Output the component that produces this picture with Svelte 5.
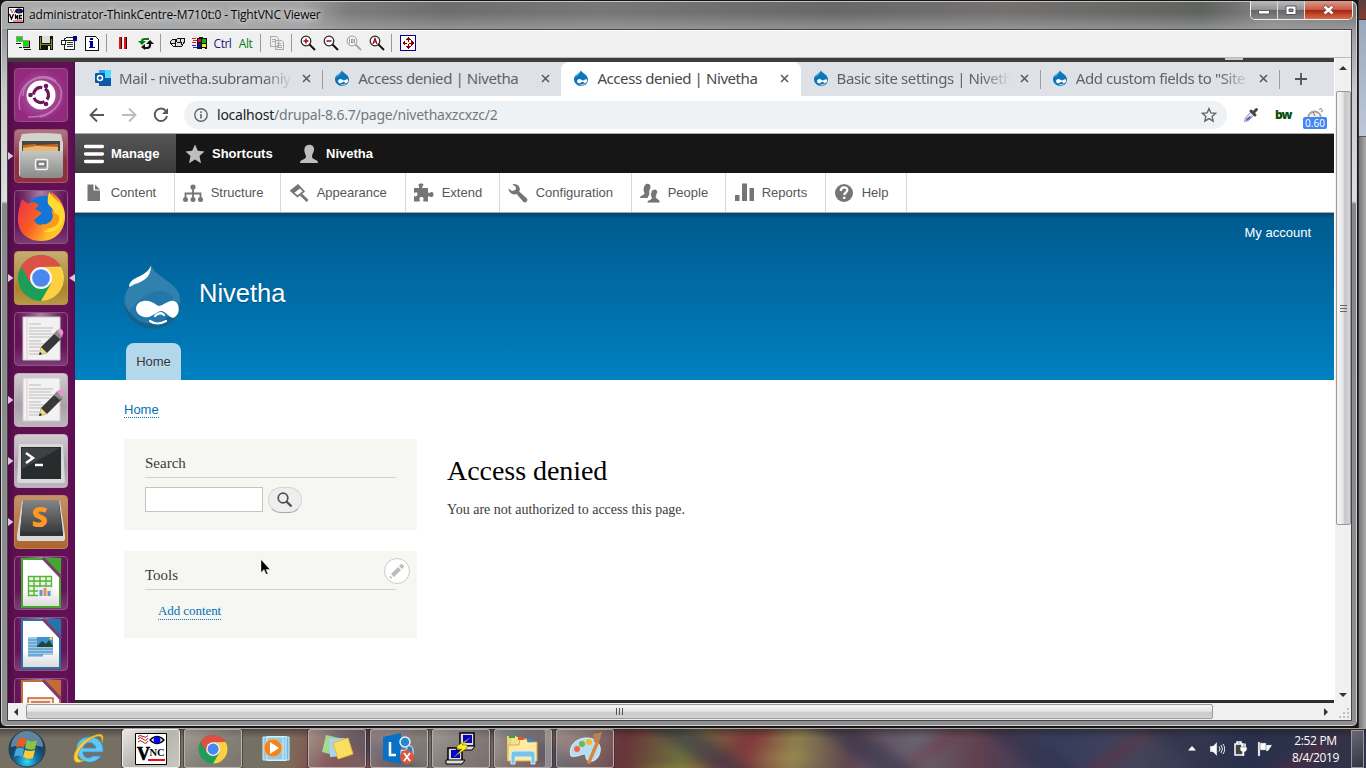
<script>
  const tabs = [
    { icon: 'mail', title: 'Mail - nivetha.subramaniy', fade: true },
    { icon: 'drop', title: 'Access denied | Nivetha' },
    { icon: 'drop', title: 'Access denied | Nivetha', active: true },
    { icon: 'drop', title: 'Basic site settings | Niveth', fade: true },
    { icon: 'drop', title: 'Add custom fields to "Site', fade: true }
  ];
  const vncTools = ['new', 'save', 'opts', 'info', '|', 'pause', 'refresh', '|', 'keys', 'win', 'Ctrl', 'Alt', '|', 'copy', '|', 'zin', 'zout', 'z100', 'zauto', '|', 'full'];
  const menu = [
    { name: 'Content', w: 100 }, { name: 'Structure', w: 106 }, { name: 'Appearance', w: 125 },
    { name: 'Extend', w: 94 }, { name: 'Configuration', w: 132 }, { name: 'People', w: 94 },
    { name: 'Reports', w: 100 }, { name: 'Help', w: 81 }
  ];
  const apps = [
    { id: 'dash' }, { id: 'files', run: true }, { id: 'firefox' }, { id: 'chrome', run: true, focus: true },
    { id: 'edit' }, { id: 'edit', run: true, light: true }, { id: 'term', run: true }, { id: 'subl', run: true },
    { id: 'calc' }, { id: 'writer' }, { id: 'impress' }
  ];
  const tasks = [
    { id: 'ie' }, { id: 'vnc', on: true, open: true }, { id: 'chrome', open: true }, { id: 'wmp' },
    { id: 'notes', open: true }, { id: 'lync', open: true }, { id: 'putty', open: true },
    { id: 'explorer', open: true, stack: true }, { id: 'paint', open: true }
  ];
</script>

{#snippet drop()}
  <svg class="fav" viewBox="0 0 57 64">
    <path d="M28 0C30 11 57 17 57 37C57 54 44 64 29 64C13 64 0 53 0 37C0 16 24 15 28 0Z" fill="#0c76b8" />
    <path d="M28 0C25 14 6 18 3 27C14 25 28 13 28 0Z" fill="#58b3e2" />
    <path d="M22 36C29 36 31 42 36 42C41 42 43 36 50 37C58 40 51 55 44 53C39 50 37 46 32 48C27 51 23 55 17 52C9 47 13 36 22 36Z" fill="#fff" />
    <path d="M26 58Q34 63 44 56" stroke="#fff" stroke-width="3" fill="none" />
  </svg>
{/snippet}

{#snippet chromeLogo()}
  <circle cx="24" cy="24" r="23" fill="#1b9e58" />
  <path d="M4.1 12.5A23 23 0 0 1 43.9 12.5L24 13L14 30Z" fill="#dd5044" />
  <path d="M43.9 12.5A23 23 0 0 1 24 47L34 29.5L24 13Z" fill="#fdd041" />
  <circle cx="24" cy="24" r="11" fill="#f4f4f4" />
  <circle cx="24" cy="24" r="8.8" fill="#4b87ee" />
{/snippet}

{#snippet vncIcon(id)}
  {#if id === 'Ctrl' || id === 'Alt'}
    <span class={id === 'Ctrl' ? 'ctrl' : 'alt'}>{id}</span>
  {:else}
    <svg width="16" height="16" viewBox="0 0 16 16" shape-rendering={id[0] === 'z' || id === 'refresh' ? 'auto' : 'crispEdges'}>
      {#if id === 'new'}
        <path d="M1 1h7v6H1zM8 5h7v7H8z" fill="#999" />
        <path d="M2 2h5v4H2zM8 6h5v5H8z" fill="#00e000" />
        <path d="M1 8h5v1H1zM3 9h1v4h3v-1H4V9zM14 6h1v7H8v-1h6zM9 14h7v1H9z" fill="#111" />
      {:else if id === 'save'}
        <path d="M1 1h14v14H1z" fill="#111" /><path d="M2 2h1v12H2zM13 4h1v10h-1zM3 9h10v1H3z" fill="#8a8a15" />
        <path d="M4 1h8v7H4z" fill="#ddd" /><path d="M10 11h2v4h-2z" fill="#eee" />
      {:else if id === 'opts'}
        <path d="M3.5 3.500h10v11h-10z" fill="#fff" stroke="#222" /><path d="M.5 5.500h4v4h-4zM3 5l3-3h6l2 3z" fill="#fff" stroke="#222" />
        <path d="M5.500 7.500h6M5.500 9.500h6M5.500 11.500h6" fill="none" stroke="#333" /><path d="M12 1h4v5h-4z" fill="#00008a" />
      {:else if id === 'info'}
        <path d="M1.500 1.500h10l3 3v11h-13z" fill="#fff" stroke="#111" />
        <path d="M6 3h3v2H6zM5 6h4v6h2v1H5v-1h1V7H5z" fill="#008" />
      {:else if id === 'pause'}
        <path d="M4 2h3v12H4zM9 2h3v12H9z" fill="#400" /><path d="M4 2h2v12H4zM9 2h2v12H9z" fill="#e01515" />
      {:else if id === 'refresh'}
        <path d="M4 8V6q0-2 3-2h4" stroke="#087c08" stroke-width="2.200" fill="none" /><path d="M0 6h8l-4 4z" fill="#087c08" />
        <path d="M12 8v2q0 3-3 3H6" stroke="#111" stroke-width="2.200" fill="none" /><path d="M8 9h8l-4-4zM7 9v6l-4-3z" fill="#111" />
      {:else if id === 'keys'}
        <path d="M1.500 6.500l2-2h4l-1 4h-5zM6 6l3-3h6l1 3-3 5-6 1z" fill="#ddd" stroke="#111" />
        <path d="M2 9l2 2h3M11 4v4M8 7h4v3" stroke="#111" fill="none" />
      {:else if id === 'win'}
        <path d="M5 3l4-1 3 1h3v11l-4-1-3 1H5z" fill="#111" /><path d="M6 4h3v3H6z" fill="#e11" /><path d="M10 4h4v4h-4z" fill="#0b0" />
        <path d="M6 8h3v4H6z" fill="#11c" /><path d="M10 9h4v3h-4z" fill="#ee0" /><path d="M0 3.500h4M1 5.500h4M0 7.500h4" stroke="#d22" /><path d="M0 10.500h4M1 12.500h4" stroke="#22c" />
      {:else if id === 'copy'}
        <path d="M1.500 1.500h6l2 2v8h-8zM6.500 5.500h6l2 2v7h-8z" fill="#eee" stroke="#aaa" /><path d="M3 4.500h4M3 6.500h3M8 8.500h4M8 10.500h5M8 12.500h5" stroke="#aaa" />
      {:else if id === 'full'}
        <path d="M.7.700h14.600v14.600H.7z" fill="#fff" stroke="#008" stroke-width="1.400" />
        <path d="M8 2l3 3H5zM8 14l3-3H5zM2 8l3-3v6zM14 8l-3-3v6z" fill="#8d0000" /><path d="M8 4v3M8 9v3M4 8h3M9 8h3" stroke="#8d0000" />
      {:else}
        <circle cx="6" cy="6" r="4.800" fill="#fff" stroke={id === 'z100' ? '#aaa' : '#222'} stroke-width="1.200" />
        <path d="M9.500 9.500l5.500 5.500" stroke={id === 'z100' ? '#aaa' : '#111'} stroke-width="2" />
        {#if id === 'zin'}<path d="M3.500 6h5M6 3.500v5" stroke="#b00018" stroke-width="1.500" />{/if}
        {#if id === 'zout'}<path d="M3.500 6h5" stroke="#b00018" stroke-width="1.500" />{/if}
        {#if id === 'z100'}<path d="M3.500 3.500v5M5.500 4h1.500v4H5.500zM8.500 4v4" stroke="#999" fill="none" />{/if}
        {#if id === 'zauto'}<path d="M4 9l2-5.500L8 9M4.500 7h3" stroke="#a00018" fill="none" stroke-width="1.200" />{/if}
      {/if}
    </svg>
  {/if}
{/snippet}

{#snippet menuIcon(name)}
  <svg width="20" height="20" viewBox="0 0 20 20" fill="#757575">
    {#if name === 'Content'}
      <path d="M4.500 1.500h6v6h6.500V18H4.500z" /><path d="M12 1.500L17 6.500h-5z" />
    {:else if name === 'Structure'}
      <circle cx="10" cy="4" r="2.600" /><circle cx="2.500" cy="16.500" r="2.500" /><circle cx="10" cy="16.500" r="2.500" /><circle cx="17.500" cy="16.500" r="2.500" />
      <path d="M10 4v12M2.500 16v-5.500h15V16" fill="none" stroke="#757575" stroke-width="1.800" />
    {:else if name === 'Appearance'}
      <path d="M9 2.200L14.800 8.500 8.500 13.500 2 7.800z" fill="none" stroke="#757575" stroke-width="1.700" /><path d="M2 7.800L9 1.500l3 3.200-7.300 5.500z" /><path d="M12 11.500l6.500 6.500" stroke="#757575" stroke-width="2.800" />
    {:else if name === 'Extend'}
      <path d="M0 5h5c1-1.500-1-2-.5-3.500C5 0 9 0 9.500 1.500 9.500 3 7.500 3.500 8.500 5H14v4.500c2 1.500 2-1 4-.500 2 .5 2 4.500 0 5-2 .5-2-1.500-4-.500v5H9.500c-1-2 .5-2 0-3.500-.5-1.500-4-1.500-4 0-.5 1.500 1 1.500 0 3.500H0V13c2 1 3.500 0 3.500-2S2 8.500 0 10z" />
    {:else if name === 'Configuration'}
      <path d="M6 1C11 1 13 6 11.200 8.500L19 15.500c1.500 2-1.500 5-3.500 3.500L8.500 11C5 12.500 1 10 .5 5.500L4 8l3.500-1L8 4 4.500 1.500z" />
    {:else if name === 'People'}
      <path d="M5 2c3-3 7 0 5 4-1 2-1 3-.5 5L8 14l-.5 1H0c0-3 4-2 4.500-5C3 8 3.500 4 5 2z" />
      <path d="M12 7c3-2 7 0 5 4-.8 2-1 3-.5 4 1 1 3.500 1 3.500 5H7c0-4 4-2.500 4.500-5C10 13 10.500 9 12 7z" stroke="#fff" stroke-width=".9" />
    {:else if name === 'Reports'}
      <path d="M1 12h4.500v6H1zM8 .500h5V18H8zM15.500 5H20v13h-4.500z" />
    {:else}
      <circle cx="10" cy="10" r="9" /><path d="M6.800 8c0-5 7-4.500 6.500-.7-.3 2.200-3 2-3 4.700M10.200 13.700v2.300" fill="none" stroke="#fff" stroke-width="2.300" />
    {/if}
  </svg>
{/snippet}

{#snippet officeDoc(c, id)}
  <path d="M7 2h24l16 16v34H7z" fill={c} /><path d="M9 4h20l16 17v29H9z" fill="url(#paper)" /><path d="M31 2h16v17z" fill={c} /><path d="M29 2l18 19" stroke="#7b3c73" stroke-width="3" />
  {#if id === 'calc'}
    <path d="M14.500 20.500h23v19h-23zM14 25h24M14 30h24M14 35h24M20 20v20M26 20v20M32 20v20" fill="#e9f5e4" stroke="#58b23c" stroke-width="1.400" />
    <path d="M24 31h15v10H24z" fill="#eee" /><path d="M27 40v-6M35 40v-5" stroke="#5b98cc" stroke-width="3" /><path d="M31 40v-8" stroke="#ef8a50" stroke-width="3" />
  {:else if id === 'writer'}
    <path d="M14 20h25v18H29v2H14z" fill="#9fcbe8" /><path d="M14 23h25M14 26h25M14 29h25M14 32h25M14 35h25M14 38h15" stroke="#3f87ba" /><path d="M23 20h16v10H23z" fill="#3c94d2" /><path d="M23 29l5-5 4 3 3-4 4 6v1H23z" fill="#234536" /><circle cx="37" cy="21.500" r="1.500" fill="#eadb52" />
  {:else}
    <path d="M14 20h25v20H14z" fill="#fae7da" stroke="#c7602c" stroke-width="1.500" /><path d="M17 24h19" stroke="#c7602c" stroke-width="1.500" />
  {/if}
{/snippet}

{#snippet appIcon(id)}
  <svg class="appsvg" width="54" height="54" viewBox="0 0 54 54">
    {#if id === 'dash'}
      <path d="M9 28C9 9 36 3 46 19C51 29 43 45 26 49M6 42C0 16 26 1 42 13M14 49C36 50 52 36 46 19" stroke="#d3a0cd" stroke-width="1.500" fill="none" opacity=".6" />
      <circle cx="27" cy="27" r="14.500" fill="#fff" /><circle cx="27" cy="27" r="7.500" fill="none" stroke="#6d1762" stroke-width="3.200" stroke-dasharray="12.500 3.200" transform="rotate(-58 27 27)" />
      <circle cx="16.500" cy="27" r="2.300" fill="#6d1762" /><circle cx="32" cy="18" r="2.300" fill="#6d1762" /><circle cx="32" cy="36" r="2.300" fill="#6d1762" />
    {:else if id === 'files'}
      <path d="M8 5Q27 3 47 5l2 9v31q0 3-3 3H9q-4 0-4-3V14z" fill="#d3d4d0" /><path d="M8 12h38v12H8z" fill="#464743" /><path d="M9 16l12-1 2 1 21-1v9H9z" fill="#c9681a" /><path d="M9 19l13-2 22 1v6H9z" fill="#eab775" />
      <path d="M6 22h43v23q0 4-4 4H10q-4 0-4-4z" fill="url(#metal)" /><rect x="21.500" y="30.500" width="12" height="10" rx="1.500" fill="#999" stroke="#f3f3f1" stroke-width="1.500" /><path d="M24 33h7v4h-7z" fill="#eee" stroke="#555" />
    {:else if id === 'firefox'}
      <circle cx="29" cy="24" r="18" fill="#1375d5" /><path d="M8 9l6 5c4-3 8-2 11 1l-4 4 7 4-8 7c2 6 11 7 17 1 4-5 3-11-2-17 1-4 2-7 2-12 7 4 13 12 14 22C52 39 43 51 27 51 11 51 3 40 4 27 4 20 6 15 8 9z" fill="url(#fox)" />
      <path d="M35 2c-2 9-2 12 2 15 9 9 3 22-8 25 14 2 22-8 21-20C49 13 40 10 35 2z" fill="#ffda31" /><path d="M37 20c5 10-1 16-10 14 7 8 20 3 18-8z" fill="#f99a18" />
    {:else if id === 'chrome'}
      <g transform="translate(3 3)">{@render chromeLogo()}</g>
    {:else if id === 'edit'}
      <path d="M9 5h37v43H9z" fill="#f2f2f2" stroke="#ccc" /><path d="M15 12h12M15 16h24M15 19h22M15 22h24M15 25h21M15 29h12M15 32h22M15 35h19M15 39h18M15 42h15" stroke="#bbb" /><path d="M13 6v41" stroke="#f1c6c8" />
      <path d="M25 43l2-8 15-15 6 6-15 15z" fill="#383838" /><path d="M25 43l2-8 6 6z" fill="#eadc75" /><path d="M25 43l1-3 2 2z" fill="#111" /><path d="M40 22l3-4 6 6-3 3z" fill="#8b8b8b" /><path d="M43 18q4-3 6 1 1 4-2 5z" fill="#e994cb" />
    {:else if id === 'term'}
      <path d="M5 10h44l2 37q0 2-2 2H5q-2 0-2-2z" fill="#d9d9d9" /><path d="M7 13h40v32H7z" fill="#292c2d" /><path d="M8 14h38L8 35z" fill="#4d5050" opacity=".6" /><path d="M12 19l7 5-7 5M21 31h8" stroke="#fff" stroke-width="2.400" fill="none" />
    {:else if id === 'subl'}
      <path d="M8 6h38l5 34v4q0 2-2 2H5q-2 0-2-2v-4z" fill="#d9d9d9" /><path d="M9 6h36l4 32v3H6v-3z" fill="#303234" /><path d="M9 8q0-3 3-3h30q3 0 3 3l3 29H6z" fill="url(#key)" /><text x="17.500" y="32" font-family="Open Sans" font-size="28" font-weight="800" fill="#ff9925">S</text>
    {:else if id === 'calc'}{@render officeDoc('#43a82c', id)}
    {:else if id === 'writer'}{@render officeDoc('#2674a9', id)}
    {:else}{@render officeDoc('#c66a38', id)}{/if}
  </svg>
{/snippet}

{#snippet taskIcon(id)}
  <svg width="36" height="36" viewBox="0 0 36 36">
    {#if id === 'ie'}
      <path d="M17 6C8 7 4 14 6 22c3 10 17 13 24 3h-8c-5 4-10 1-10-4h20C33 11 26 5 17 6zM12 17c2-7 11-7 13 0z" fill="#62c5f2" stroke="#2794d4" stroke-width=".8" />
      <path d="M31 12C34 4 31 1 22 5 11 9 2 20 3 28c1 5 6 4 11 1-6 1-8-1-7-6C10 14 22 5 28 5c3 0 3 3 3 7z" fill="#fbd03c" stroke="#cc971e" stroke-width=".7" />
    {:else if id === 'vnc'}
      <path d="M2.500 2.500h31v31h-31z" fill="#fff" stroke="#000" /><path d="M5 8q2-3 5 0t5-1M5 11q2-3 5 0t5-1M5 5.500q2-2 5 0t5-1" fill="none" stroke="#a11" />
      <path d="M17 9q7-7 14 0-7 7-14 0z" fill="#fff" stroke="#000" stroke-width="1.400" /><circle cx="24" cy="9" r="3.500" fill="#0008ed" /><text x="4" y="29" font-family="Liberation Serif" font-size="18" font-weight="700" stroke="#000" stroke-width=".7">V</text><text x="16.500" y="25" font-family="Liberation Serif" font-size="10.500" font-weight="700" textLength="15">NC</text><path d="M15 29h17" stroke="#f20b0b" stroke-width="2" />
    {:else if id === 'chrome'}<g transform="translate(3 3) scale(.63)">{@render chromeLogo()}</g>
    {:else if id === 'wmp'}
      <path d="M14 6h18v23H14z" fill="#75b7dd" stroke="#d0f1ff" /><path d="M10 5.500h19v24H10zM6 6h20v23H6z" fill="#8accea" stroke="#d0f1ff" /><circle cx="16" cy="17" r="9" fill="#f18422" stroke="#fbb56b" /><path d="M13 11l9 6-9 6z" fill="#fff" />
    {:else if id === 'notes'}
      <path d="M7 4l17 4-5 17-16-4z" fill="#a5d890" /><path d="M10 8l16-1 1 18-16 1z" fill="#a7d5f5" /><path d="M14 12l15-5 5 16-15 5z" fill="#f8df62" stroke="#e4bd32" />
    {:else if id === 'lync'}
      <path d="M2 6l18-4v31L2 29z" fill="#0871c6" /><path d="M9 11v13h6" stroke="#fff" stroke-width="2.500" fill="none" /><circle cx="24" cy="11" r="5" fill="#2689d0" stroke="#e6f2fa" stroke-width="1.500" /><path d="M20 24v-5q7 2 6-4 6-1 6 4v5z" fill="#237fcb" stroke="#e6f2fa" /><circle cx="26" cy="26" r="7" fill="#dd5639" /><path d="M23 22l6 8M29 22l-6 8" stroke="#fff" stroke-width="1.800" />
    {:else if id === 'putty'}
      <path d="M17 2h14v13H17zM5 17h14v13H5z" fill="#ddd" stroke="#000" stroke-width="1.500" /><path d="M20 4h9v8h-9zM8 19h9v8H8z" fill="#0703cf" /><path d="M15 15h17l-3 4H13zM3 29h19l-3 4H3z" fill="#ddd" stroke="#000" /><path d="M27 7L14 15v3h5l-8 8 13-9v-3h-5z" fill="#fbef13" stroke="#866f00" stroke-width=".6" />
    {:else if id === 'explorer'}
      <path d="M4 5h9l2 3h15v22H4z" fill="#edd278" /><path d="M9 6h9l2 3h10v21H5z" fill="#f5df91" /><path d="M17 8h7l1 3h9v19H5V14h11z" fill="#ffe9a0" stroke="#d0ae52" /><path d="M6 4h6v3H6z" fill="#31a63f" /><path d="M15 6h6v3h-6z" fill="#de5835" /><path d="M24 8h6v3h-6z" fill="#3189d1" /><path d="M8 31v-8q0-3 3-3h18q3 0 3 3v10h-4v-7H12v7H8z" fill="#78c3e8" stroke="#d1f0ff" />
    {:else if id === 'paint'}
      <path d="M4 25C1 15 9 7 20 7c10 0 16 8 12 17-3 8-13 8-13 2 0-7-7 1-15-1z" fill="#b7def0" stroke="#dff4ff" /><circle cx="10" cy="18" r="3" fill="#ef6648" /><circle cx="15" cy="13" r="3" fill="#6dba47" /><circle cx="22" cy="11" r="3" fill="#ffb31c" /><path d="M20 32l9-22 3 2-9 21z" fill="#d9843e" /><path d="M26 3l9-2-3 11-5-1z" fill="#b98154" />
    {/if}
  </svg>
{/snippet}

<svg class="defs" width="0" height="0">
  <defs>
    <linearGradient id="metal" x2="0" y2="1"><stop stop-color="#c5c6c4" /><stop offset="1" stop-color="#898b89" /></linearGradient>
    <linearGradient id="paper" x2="0" y2="1"><stop stop-color="#fff" /><stop offset=".6" stop-color="#fff" /><stop offset="1" stop-color="#dcdcdc" /></linearGradient>
    <linearGradient id="fox" x2=".9" y2=".5"><stop stop-color="#e62b55" /><stop offset=".55" stop-color="#fa5d24" /><stop offset="1" stop-color="#ffc42c" /></linearGradient>
    <linearGradient id="key" x2="0" y2="1"><stop stop-color="#858585" /><stop offset="1" stop-color="#393b3d" /></linearGradient>
  </defs>
</svg>

<main class="screen">
  <div class="desk">
    <section class="window">
      <header class="title">
        <svg width="16" height="16" viewBox="0 0 16 16"><path d="M.5.500h15v15H.5z" fill="#fff" stroke="#000" /><path d="M2 3h4M3 5h4" stroke="#911" stroke-dasharray="2 1" /><ellipse cx="11" cy="4" rx="4" ry="2.500" fill="#111" /><circle cx="11" cy="4" r="1.500" fill="#22d" /><path d="M1.500 7l2 5 2-5M7.500 12V8.500l2 3V8M14 8.500h-2.500v3H14" stroke="#000" stroke-width="1.300" fill="none" /><path d="M5 14h10" stroke="#d11" /></svg>
        <span class="caption">administrator-ThinkCentre-M710t:0 - TightVNC Viewer</span>
        <div class="winbtns">
          <span><svg width="12" height="12"><path d="M.5 6.500h11v3.500H.5z" fill="#fff" stroke="#555a63" /></svg></span>
          <span><svg width="12" height="11"><path d="M1 1h10v8.500H1z" fill="#fff" stroke="#555a63" /><path d="M4 4h4v2.500H4z" fill="#888" stroke="#555a63" /></svg></span>
          <span class="close"><svg width="13" height="12"><path d="M2 2l9 8M11 2l-9 8" stroke="#7a4a48" stroke-width="4" /><path d="M2.500 2.500l8 7M10.500 2.500l-8 7" stroke="#fff" stroke-width="2.400" /></svg></span>
        </div>
      </header>

      <div class="client">
        <div class="vncbar">
          {#each vncTools as t}
            {#if t === '|'}<i class="sep"></i>{:else}<div class="slot">{@render vncIcon(t)}</div>{/if}
          {/each}
        </div>
        <div class="mid">
          <div class="remote">
            <div class="panel"><i></i></div>
            <div class="ubuntu">
              <nav class="launcher">
                {#each apps as a}
                  <div class="approw">
                    <span class="arrow" class:shown={a.run}></span>
                    <div class="tile {a.id}" class:light={a.light}>{@render appIcon(a.id)}</div>
                    <span class="arrow back" class:shown={a.focus}></span>
                  </div>
                {/each}
              </nav>
              <section class="browser">
                <div class="tabs">
                  {#each tabs as t, i}
                    <div class="tab" class:active={t.active} class:line={i === 0 || i === 3 || i === 4}>
                      {#if t.icon === 'mail'}
                        <svg class="fav mail" viewBox="0 0 16 16"><path d="M4 0h12v16H4z" fill="#28a8ea" /><path d="M10 0h6v8h-6z" fill="#50d9ff" /><path d="M4 8h12v8H4z" fill="#0a5ba8" /><path d="M10 8h6l-4 3z" fill="#0364b8" /><rect y="3" width="10" height="10" rx="1" fill="#0c59a4" /><circle cx="5" cy="8" r="2.500" fill="none" stroke="#fff" stroke-width="1.500" /></svg>
                      {:else}{@render drop()}{/if}
                      <span class="ttl" class:fade={t.fade}>{t.title}</span>
                      <svg class="x" width="9" height="9"><path d="M1 1l7 7M8 1l-7 7" stroke="#555a5f" stroke-width="1.500" /></svg>
                    </div>
                  {/each}
                  <svg class="plus" width="12" height="12"><path d="M6 0v12M0 6h12" stroke="#505458" stroke-width="1.800" /></svg>
                </div>
                <div class="nav">
                  <svg class="bk" width="16" height="16"><path d="M15 8H2M8 1.500L1.500 8 8 14.500" fill="none" stroke="#555a5f" stroke-width="1.900" /></svg>
                  <svg class="fw" width="16" height="16"><path d="M1 8h13M8 1.500L14.500 8 8 14.500" fill="none" stroke="#bbbec1" stroke-width="1.900" /></svg>
                  <svg class="rl" width="16" height="16"><path d="M13 4.200A6.200 6.200 0 1 0 14 9" fill="none" stroke="#555a5f" stroke-width="1.900" /><path d="M15 1v6H9z" fill="#555a5f" /></svg>
                  <div class="url">
                    <svg width="14" height="14"><circle cx="7" cy="7" r="6.200" fill="none" stroke="#5f6368" stroke-width="1.400" /><path d="M7 6v4.500M7 3.200v1.700" stroke="#5f6368" stroke-width="1.600" /></svg>
                    <span><b>localhost</b>/drupal-8.6.7/page/nivethaxzcxzc/2</span>
                    <svg class="star" width="16" height="16" viewBox="0 0 16 16"><path d="M8 1.500l1.900 4.400 4.800.4-3.600 3.100 1.100 4.700L8 11.600l-4.200 2.500 1.100-4.700L1.300 6.300l4.800-.4z" fill="none" stroke="#5f6368" stroke-width="1.300" /></svg>
                  </div>
                  <svg class="pick" width="16" height="16"><path d="M1.500 14.500l1-4 6-6 3 3-6 6z" fill="#dfe3f3" stroke="#999" /><path d="M3 13.500l.5-2L6 9.500h3l-4 4z" fill="#4a6ae0" /><path d="M8 4l4 4M10.500 5.500L13.500 2.500" stroke="#4a4446" stroke-width="3" stroke-linecap="round" /></svg>
                  <span class="bw">bw</span>
                  <div class="gauge"><svg width="18" height="12"><path d="M2 11a6.500 6.500 0 0 1 13 0" fill="#eee" stroke="#a5a5a5" stroke-width="2" /><path d="M7 5l2 4" stroke="#b55" /><path d="M13 2.500l3-1M15 5l2-2" stroke="#aaa" stroke-width="1.500" /></svg><span>0.60</span></div>
                </div>
                <div class="adminbar">
                  <div class="manage"><svg width="20" height="20"><path d="M1.500 2.500h17M1.500 10h17M1.500 17.500h17" stroke="#fff" stroke-width="3.300" stroke-linecap="round" /></svg><span>Manage</span></div>
                  <div class="short"><svg width="20" height="20" viewBox="0 0 20 20"><path d="M10 .5l2.800 6.300 6.700.6-5 4.700 1.500 7.200-6-3.900-6 3.900 1.500-7.200-5-4.700 6.700-.6z" fill="#bebebe" /></svg><span>Shortcuts</span></div>
                  <div class="user"><svg width="20" height="20" viewBox="0 0 20 20"><path d="M6 3c3-4 10-2 9 3-.5 3-2 4-2 7 1 3 6 2 6 6H1c0-4 5-3 6-6 0-3-3-5-1-10z" fill="#bebebe" /></svg><span>Nivetha</span></div>
                </div>
                <div class="tray">
                  {#each menu as m}<div class="item" style="width:{m.w}px">{@render menuIcon(m.name)}<span>{m.name}</span></div>{/each}
                </div>
                <div class="hero">
                  <div class="account">My account</div>
                  <div class="brand">
                    <svg width="58" height="64" viewBox="0 0 58 64">
                      <path d="M27 0C30 12 57 17 57 37C57 54 44 64 29 64C13 64 0 53 0 37C0 16 24 15 27 0Z" fill="#2478a9" /><path d="M0 38C1 53 13 64 29 64 44 64 57 53 57 37 55 42 52 45 48 47 34 65 11 62 0 38z" fill="#126290" />
                      <path d="M27 0C30 12 52 17 55 30c1 10-2 12-4 7C44 18 20 24 5 47-9 18 23 16 27 0z" fill="#3583b0" opacity=".8" /><path d="M27 1c0 12-9 16-16 18-4 2-6 4-6 2 2-10 16-8 22-20z" fill="#fff" />
                      <path d="M20 36c8-1 11 4 15 5 6-1 9-6 15-5 6 2 6 12 2 15-5 6-9-5-15-5-6 1-10 8-17 6-11-3-10-15 0-16z" fill="#fff" /><path d="M31 51q5-5 9-1M26 56q7 5 16 0" fill="none" stroke="#fff" stroke-width="2.200" stroke-linecap="round" />
                    </svg>
                    <span>Nivetha</span>
                  </div>
                  <div class="hometab">Home</div>
                </div>
                <div class="page">
                  <div class="crumb"><span>Home</span></div>
                  <div class="cols">
                    <aside>
                      <div class="block search"><h2>Search</h2>
                        <div class="form"><i></i><div class="go"><svg width="16" height="16"><circle cx="6" cy="6" r="4.800" fill="none" stroke="#505050" stroke-width="1.700" /><path d="M9.500 9.500l5 5" stroke="#505050" stroke-width="2.400" /></svg></div></div>
                      </div>
                      <div class="block tools"><h2>Tools</h2><span class="add">Add content</span>
                        <div class="pencil"><svg width="16" height="16" viewBox="0 0 16 16"><path d="M2 11l7-7 3 3-7 7zM10 3l1.500-1.500q1-1 2 0l1 1q1 1 0 2L13 6zM1 12.500L3.500 15 .5 15.500z" fill="#bcbcbc" /></svg></div>
                      </div>
                    </aside>
                    <article><h1>Access denied</h1><p>You are not authorized to access this page.</p></article>
                  </div>
                </div>
                <div class="dark"></div>
                <svg class="cursor" width="12" height="17" viewBox="0 0 12 17"><path d="M1 .500v13l3-3 2 4.500h2L6 10.500h4z" fill="#000" stroke="#fff" stroke-width=".4" /></svg>
              </section>
            </div>
          </div>
          <div class="vscroll"><b class="up"></b><div class="vthumb"><i></i><i></i><i></i></div><b class="down"></b></div>
        </div>
        <div class="hscroll"><b class="left"></b><div class="hthumb"><i></i><i></i><i></i></div><b class="right"></b><svg class="grip" width="16" height="17"><path d="M12 5h2v2h-2zM8 9h2v2H8zM12 9h2v2h-2zM4 13h2v2H4zM8 13h2v2H8zM12 13h2v2h-2z" fill="#c0c0c0" /></svg></div>
      </div>
    </section>
    <div class="behind"><i class="red"></i><i class="pale"></i><i class="sb"></i></div>
  </div>

  <footer class="taskbar">
    <div class="start"><svg width="38" height="38" viewBox="0 0 38 38"><defs><radialGradient id="orb" cy=".85"><stop stop-color="#34d9f5" /><stop offset=".55" stop-color="#1674a8" /><stop offset="1" stop-color="#174468" /></radialGradient></defs><circle cx="19" cy="19" r="18" fill="url(#orb)" stroke="#1e3d54" /><path d="M3 17a16 16 0 0 1 32 0q-16-5-32 0z" fill="#d3e8ef" opacity=".4" /><path d="M10 10q4-4 8-1l-2 9q-4-3-8 0z" fill="#e95c25" /><path d="M19 10q5 3 10 0l-2 9q-5 2-10-1z" fill="#8ac442" /><path d="M8 19q4-3 8 0l-2 8q-4-3-8 0z" fill="#45a9dc" /><path d="M17 20q5 2 10 0l-2 8q-5 2-10-1z" fill="#ffcb34" /></svg></div>
    {#each tasks as t}<div class="task" class:open={t.open} class:on={t.on} class:stack={t.stack}>{@render taskIcon(t.id)}</div>{/each}
    <div class="systray">
      <svg class="s1" width="8" height="5"><path d="M4 0l4 4.500H0z" fill="#fff" /></svg>
      <svg class="s2" width="16" height="16"><path d="M1 5h3l4-4v14l-4-4H1z" fill="#fff" stroke="#555" stroke-width=".5" /><path d="M10 5.500q2 2.500 0 5M12 4q3 4 0 8M14 3q3.500 5 0 10" fill="none" stroke="#eee" /></svg>
      <svg class="s3" width="16" height="16"><path d="M2 3h8v11H2zM4 1h4v2H4z" fill="#444" stroke="#fff" stroke-width="1.500" /><path d="M7 6h7v3l-2 2h-3l-2-2z" fill="#fff" stroke="#444" stroke-width=".6" /><path d="M9 2.500v4M12 2.500v4M10.500 10v5" stroke="#fff" stroke-width="1.500" /></svg>
      <svg class="s4" width="16" height="16"><path d="M1 1h2v14H1zM3 2h6v7H3zM9 4h6l-2 3-2 3H9z" fill="#fff" stroke="#777" stroke-width=".4" /></svg>
      <div class="clock"><span>2:52 PM</span><span>8/4/2019</span></div>
      <div class="peek"></div>
    </div>
  </footer>
</main>

<style>
  :global(body) { margin: 0; overflow: hidden; background: #222; }
  * { box-sizing: border-box; }
  svg { display: block; flex: none; }
  .defs { position: absolute; }
  .screen { width: 1366px; height: 768px; display: flex; flex-direction: column; overflow: hidden; background: #151515; font-family: "Liberation Sans", Arial, sans-serif; }
  .desk { height: 728px; display: flex; }
  .window { width: 1358px; height: 727px; border: 1px solid #161618; border-radius: 7px 7px 6px 6px; padding: 0 5px 5px 6px; background: linear-gradient(#8e8e90 0, #9b9ca0 30px, #c9c9cc 90px, #dedee0 200px, #88888c 203px, #8f8f92 100%); box-shadow: inset 0 0 0 1px #d1d1d3; }
  .title { height: 28px; display: flex; align-items: center; margin: 0 -4px 0 -5px; padding: 0 0 1px 6px; background: linear-gradient(transparent 40%, #a9abae99 27px), linear-gradient(90deg, #aaa 0, #a3a3a3 300px, #7e7e7e 345px, #6e6e6e 440px, #777 600px, #686868 830px, #747271 1000px, #616360 1200px, #858585 1270px, #777 1357px); border-top: 1px solid #c5c5c5; border-radius: 6px 6px 0 0; }
  .caption { font: 12px/16px "Open Sans", sans-serif; letter-spacing: -.18px; margin: -1px 0 0 5px; color: #050505; text-shadow: 0 0 7px #e4e4e4, 0 0 5px #ddd; white-space: nowrap; }
  .winbtns { margin-left: auto; margin-right: 3px; align-self: flex-start; display: flex; height: 19px; margin-top: -1px; border: 1px solid #eee; border-top: 0; border-radius: 0 0 5px 5px; overflow: hidden; }
  .winbtns span { width: 27px; display: grid; place-items: center; border-right: 1px solid #ddd; background: linear-gradient(#bbb, #929292 48%, #666 52%, #858585); }
  .winbtns .close { width: 47px; border: 0; background: linear-gradient(#dc9c8d, #c65b43 48%, #aa2412 52%, #d96d4b); }
  .client { width: 1345px; height: 692px; border: 1px solid #454548; display: flex; flex-direction: column; background: #eee; }
  .vncbar { height: 28px; background: #f0f0f0; border-top: 1px solid #fff; padding: 0 0 2px 3px; display: flex; align-items: center; border-bottom: 1px solid #bbb; }
  .slot { width: 23px; display: flex; justify-content: center; align-items: center; }
  .sep { width: 1px; height: 18px; margin: 0 4px 0 3px; background: #999; }
  .ctrl, .alt { font: 12px "Open Sans", sans-serif; letter-spacing: -.5px; color: #191984; }
  .alt { color: #087c18; }
  .mid { height: 645px; display: flex; }
  .remote { width: 1326px; background: #fff; }
  .panel { height: 4px; background: #403e3a; display: flex; justify-content: flex-end; padding-right: 91px; }
  .panel i { width: 18px; height: 2px; background: #ccc; }
  .ubuntu { display: flex; height: 641px; }
  .launcher { width: 67px; background: linear-gradient(90deg, #4b0b42, #5e0f50 6px, #640f56 60px, #5a0c50); padding-top: 6px; display: flex; flex-direction: column; gap: 7px; overflow: hidden; }
  .approw { display: flex; align-items: center; height: 54px; flex: none; }
  .arrow { width: 6px; height: 8px; flex: none; }
  .arrow.shown { background: #d9c9d5; clip-path: polygon(0 0, 90% 50%, 0 100%); }
  .arrow.back { margin-left: 1px; }
  .arrow.back.shown { clip-path: polygon(100% 0, 0 50%, 100% 100%); }
  .tile { width: 54px; height: 54px; border-radius: 4px; border: 1px solid #895581; background: radial-gradient(ellipse at 50% 0, #a982a5, #74306b 45%, transparent 65%), linear-gradient(#66145a, #66145a 65%, #7c3c74); overflow: hidden; flex: none; }
  .appsvg { margin: -1px; }
  .tile.dash { background: radial-gradient(circle, #b76bae, #94297f 70%); }
  .tile.files { background: linear-gradient(#ae7884, #8f2f40 60%); border-color: #a05c6a; }
  .tile.chrome { background: linear-gradient(#c6ad75, #a98328 70%, #b89845); border-color: #b7984b; }
  .tile.light, .tile.term { background: linear-gradient(#d3c9d1, #aaa0a9 60%, #bfb5bd); border-color: #bcb1ba; }
  .tile.subl { background: linear-gradient(#c39069, #ae642b); border-color: #bd8658; }
  .browser { width: 1259px; position: relative; display: flex; flex-direction: column; overflow: hidden; }
  .tabs { height: 34px; background: #dee1e6; display: flex; align-items: center; padding-left: 8px; flex: none; }
  .tab { width: 239.200px; height: 34px; flex: none; display: flex; align-items: center; padding: 0 0 2px 12px; font: 15px "Noto Sans", sans-serif; color: #5f6368; position: relative; }
  .tab.active { background: #fff; border-radius: 8px 8px 0 0; color: #45494d; }
  .tab.line::after { content: ""; position: absolute; right: -1px; top: 8px; height: 19px; width: 1px; background: #9a9da1; }
  .fav { width: 14px; height: 16px; margin-left: 1px; }
  .fav.mail { width: 16px; margin: 0 -1px 0 0; }
  .ttl { width: 179px; margin-left: 9px; white-space: nowrap; letter-spacing: -.42px; }
  .fade { -webkit-mask: linear-gradient(90deg, #000 145px, transparent 174px); mask: linear-gradient(90deg, #000 145px, transparent 174px); }
  .x { margin-left: 4px; margin-top: 1px; }
  .plus { margin-left: 16px; margin-top: -1px; }
  .nav { height: 38px; background: #fff; display: flex; align-items: center; padding-left: 14px; border-bottom: 1px solid #aaa; flex: none; }
  .fw { margin-left: 16px; }
  .rl { margin-left: 16px; }
  .url { margin-left: 15px; width: 1043px; height: 28px; border-radius: 14px; background: #eff2f4; display: flex; align-items: center; padding: 0 10px; font: 14px "Noto Sans", sans-serif; color: #74787c; }
  .url span { margin-left: 9px; letter-spacing: -.23px; white-space: nowrap; }
  .url b { font-weight: 400; color: #202124; }
  .star { margin-left: auto; }
  .pick { margin-left: 16px; }
  .bw { font: 800 12px "Open Sans", sans-serif; letter-spacing: -1.300px; color: #075011; margin-left: 16px; width: 16px; }
  .gauge { width: 24px; height: 24px; margin-left: 12px; display: flex; flex-direction: column; align-items: center; flex: none; margin-top: 8px; }
  .gauge span { font: 10px/12px "Noto Sans", sans-serif; background: #4184f3; border-radius: 2px; color: #fff; width: 24px; text-align: center; margin-top: -2px; z-index: 1; }
  .adminbar { height: 39px; background: #161616; display: flex; color: #fff; font-size: 13px; font-weight: 700; flex: none; }
  .adminbar div { display: flex; align-items: center; gap: 7px; }
  .manage { width: 101px; padding-left: 9px; background: linear-gradient(#565656, #3a3a3a); }
  .short { padding-left: 9px; width: 114px; }
  .user { padding-left: 9px; }
  .tray { height: 40px; display: flex; background: #fff; border-bottom: 1px solid #a8a8a8; flex: none; }
  .item { display: flex; align-items: center; padding-left: 8px; gap: 7.700px; border-right: 1px solid #d8d8d8; font-size: 13px; color: #565656; }
  .hero { height: 167px; background: linear-gradient(#00436a 0, #005b90 5px, #0080c0 100%); color: #fff; display: flex; flex-direction: column; flex: none; }
  .account { height: 40px; line-height: 39px; text-align: right; padding-right: 23px; font-size: 13px; flex: none; }
  .brand { height: 90px; padding: 12px 0 0 49px; display: flex; gap: 17px; flex: none; }
  .brand span { font-size: 25.500px; line-height: 56px; text-shadow: 0 1px 1px #0246; }
  .hometab { margin-left: 51px; width: 55px; height: 37px; background: #b3d8eb; border-radius: 8px 8px 0 0; color: #333; font-size: 13px; line-height: 37px; text-align: center; text-shadow: 0 1px #fff6; }
  .page { height: 320px; background: #fff; padding-left: 49px; flex: none; }
  .crumb { height: 59px; padding-top: 22px; font-size: 13px; color: #0071b3; line-height: 15px; }
  .crumb span, .add { border-bottom: 1px dotted #0071b3; }
  .crumb span { display: inline-block; height: 16px; }
  .cols { display: flex; font-family: "Liberation Serif", serif; color: #3b3b3b; }
  aside { width: 293px; display: flex; flex-direction: column; gap: 21px; }
  .block { background: #f6f6f2; padding: 13px 21px; position: relative; }
  .search { height: 91px; }
  .tools { height: 87px; }
  h2 { font-size: 15px; line-height: 22px; font-weight: 400; margin: 0; height: 26px; border-bottom: 1px solid #d1d1cd; }
  .form { display: flex; margin-top: 9px; gap: 5px; }
  .form i { width: 118px; height: 25px; border: 1px solid #c4c4c4; background: #fff; }
  .go { width: 34px; height: 26px; border-radius: 13px; border: 1px solid #d5d5d5; border-bottom-color: #aaa; background: #eee; display: grid; place-items: center; }
  .add { display: inline-block; margin: 13px 0 0 13px; font-size: 13px; letter-spacing: -.07px; line-height: 15px; height: 17px; color: #0071b3; }
  .pencil { position: absolute; right: 7px; top: 7px; width: 26px; height: 26px; border: 1px solid #ccc; border-radius: 50%; background: #fff; display: grid; place-items: center; }
  article { margin-left: 30px; }
  h1 { font-weight: 400; font-size: 28px; line-height: 34px; margin: 15px 0 0; color: #000; letter-spacing: -.05px; }
  p { font-size: 14px; line-height: 20px; margin: 12px 0 0; }
  .dark { height: 3px; background: #2e2f2d; flex: none; }
  .cursor { position: absolute; left: 185px; top: 497px; }
  .vscroll { width: 17px; background: #f0f0f0; display: flex; flex-direction: column; align-items: center; padding-top: 8px; border-left: 1px solid #fff; }
  .vscroll b, .hscroll b { width: 0; height: 0; border: 4px solid transparent; flex: none; }
  .vscroll .up { border-bottom-color: #333; border-top: 0; }
  .vthumb { width: 15px; height: 434px; margin-top: 21px; border: 1px solid #999; border-radius: 2px; background: linear-gradient(90deg, #f5f5f5, #e8e8ea 45%, #c7c7ca 60%, #d6d6d8); display: flex; flex-direction: column; align-items: center; justify-content: center; gap: 2px; flex: none; }
  .vthumb i { width: 7px; height: 1px; background: #666; }
  .vscroll .down { margin-top: auto; margin-bottom: 6px; border-top-color: #333; border-bottom: 0; }
  .hscroll { height: 17px; background: #f0f0f0; display: flex; align-items: center; padding-left: 2px; }
  .hscroll .left { border-right-color: #333; border-left: 0; margin-left: 4px; }
  .hthumb { width: 1187px; height: 15px; margin-left: 8px; border: 1px solid #999; border-radius: 2px; background: linear-gradient(#f5f5f5, #e7e7e9 45%, #c9c9cc 60%, #d4d4d7); display: flex; align-items: center; justify-content: center; gap: 2px; }
  .hthumb i { width: 1px; height: 7px; background: #555; }
  .hscroll .right { border-left-color: #333; border-right: 0; margin-left: 111px; }
  .grip { margin-left: auto; }
  .behind { flex: 1; display: flex; flex-direction: column; border-left: 1px solid #333; }
  .red { height: 20px; background: linear-gradient(#574044, #88392f); border-bottom: 1px solid #333; }
  .pale { height: 117px; background: linear-gradient(#9aa8bc, #bdc9d9); border-bottom: 1px solid #52565c; }
  .sb { flex: 1; background: linear-gradient(90deg, #777, #aaa); }
  .taskbar { height: 40px; display: flex; align-items: center; border-top: 1px solid #aaa59b; position: relative; isolation: isolate; overflow: hidden; }
  .taskbar::before { content: ""; position: absolute; inset: -12px; z-index: -1; filter: blur(5px); background:
    radial-gradient(ellipse at 646px 12px, #7b2936 0 12px, transparent 32px),
    radial-gradient(ellipse at 690px 55px, #b19534 0 22px, transparent 45px),
    radial-gradient(ellipse at 760px 24px, #93303e 0 10px, transparent 30px),
    radial-gradient(ellipse at 802px 40px, #b69b4a 0 15px, transparent 38px),
    linear-gradient(90deg, #756f64 0 270px, transparent 320px),
    repeating-linear-gradient(35deg, transparent 0 42px, #30324b88 52px 66px, transparent 76px 94px),
    repeating-linear-gradient(-35deg, transparent 0 48px, #7726354d 57px 62px, transparent 72px 111px),
    linear-gradient(100deg, #706b60 0, #7b7568 220px, #846c59 300px, #763d41 350px, #736c68 430px, #74605c 580px, #663238 630px, #6e713e 690px, #823f3e 755px, #8f814f 800px, #5e4551 855px, #686473 920px, #62404d 980px, #353b5c 1050px, #444459 1140px, #29304b 1240px, #363449 1390px); }
  .taskbar::after { content: ""; position: absolute; inset: 0; z-index: -1; background: linear-gradient(#18161766, transparent 9px); }
  .start { width: 57px; padding-left: 8px; }
  .task { width: 58px; height: 39px; margin-left: 4px; display: grid; place-items: center; border: 1px solid transparent; border-radius: 3px; flex: none; }
  .task:nth-child(2) { margin-left: 3px; }
  .task.open { border-color: #cfccc8aa; background: linear-gradient(140deg, #e5e5e566, #aaa6a255 50%, #89898944); box-shadow: 0 0 0 1px #302d2d99; }
  .task.on { background: linear-gradient(140deg, #e8e7e4, #b8b5af 50%, #c9c6c0); border-color: #eee; }
  .task.stack { box-shadow: inset -5px 0 #7775, inset -6px 0 #ccc8, 0 0 0 1px #302d2d99; padding-right: 5px; }
  .systray { margin-left: auto; display: flex; align-items: center; height: 39px; }
  .s2 { margin-left: 13px; }
  .s3 { margin-left: 8px; }
  .s4 { margin-left: 8px; }
  .clock { width: 72px; margin-left: 2px; padding: 0 0 0 9px; display: flex; flex-direction: column; align-items: center; font: 12px/17px "Open Sans", sans-serif; letter-spacing: -.35px; color: #fff; white-space: nowrap; }
  .peek { width: 13px; height: 38px; margin: 0 2px 0 4px; border: 1px solid #999; background: linear-gradient(150deg, #aaa7, #3336); }
</style>
